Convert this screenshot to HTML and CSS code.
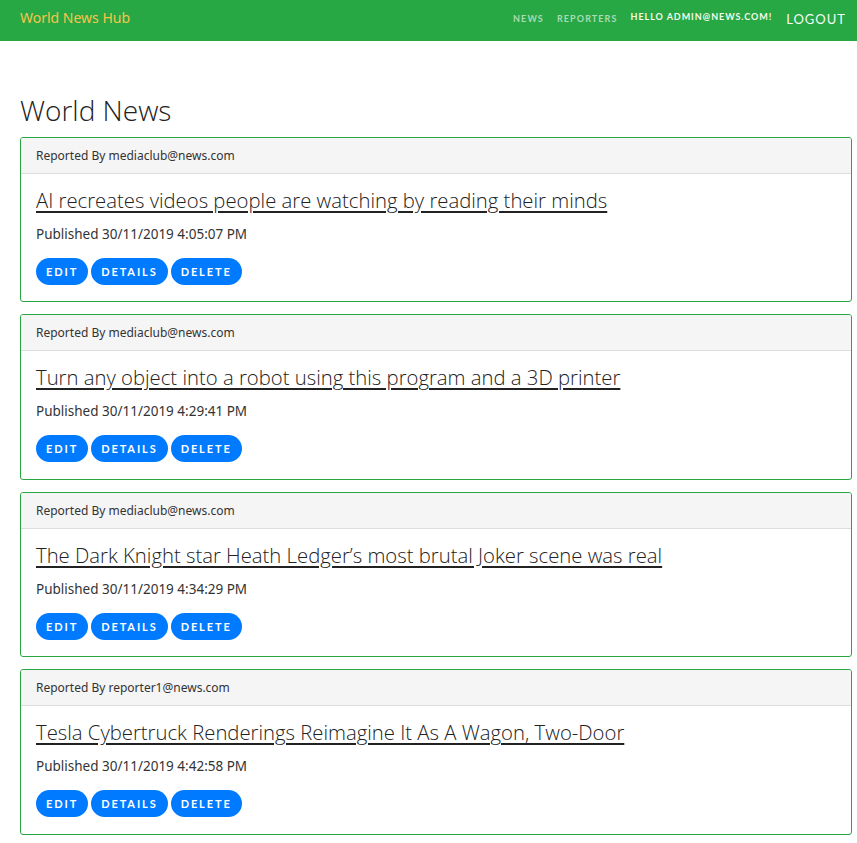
FILE: index.html
```html
<!DOCTYPE html>
<html>
<head>
<meta charset="utf-8">
<link rel="stylesheet" href="styles.css">
</head>
<body>
<nav class="navbar">
  <a class="brand" href="#">World News Hub</a>
  <div class="nav-right">
    <a class="nav-link" href="#">News</a>
    <a class="nav-link" href="#">Reporters</a>
    <span class="hello">Hello admin@news.com!</span>
    <a class="logout" href="#">Logout</a>
  </div>
</nav>
<main class="container">
  <h1 class="page-title">World News</h1>

  <div class="card">
    <div class="card-header">Reported By mediaclub@news.com</div>
    <div class="card-body">
      <a class="news-title" href="#">AI recreates videos people are watching by reading their minds</a>
      <p class="published">Published 30/11/2019 4:05:07 PM</p>
      <div class="actions"><a class="btn" href="#">Edit</a><a class="btn" href="#">Details</a><a class="btn" href="#">Delete</a></div>
    </div>
  </div>

  <div class="card">
    <div class="card-header">Reported By mediaclub@news.com</div>
    <div class="card-body">
      <a class="news-title" href="#">Turn any object into a robot using this program and a 3D printer</a>
      <p class="published">Published 30/11/2019 4:29:41 PM</p>
      <div class="actions"><a class="btn" href="#">Edit</a><a class="btn" href="#">Details</a><a class="btn" href="#">Delete</a></div>
    </div>
  </div>

  <div class="card">
    <div class="card-header">Reported By mediaclub@news.com</div>
    <div class="card-body">
      <a class="news-title" href="#">The Dark Knight star Heath Ledger’s most brutal Joker scene was real</a>
      <p class="published">Published 30/11/2019 4:34:29 PM</p>
      <div class="actions"><a class="btn" href="#">Edit</a><a class="btn" href="#">Details</a><a class="btn" href="#">Delete</a></div>
    </div>
  </div>

  <div class="card">
    <div class="card-header">Reported By reporter1@news.com</div>
    <div class="card-body">
      <a class="news-title" href="#">Tesla Cybertruck Renderings Reimagine It As A Wagon, Two-Door</a>
      <p class="published">Published 30/11/2019 4:42:58 PM</p>
      <div class="actions"><a class="btn" href="#">Edit</a><a class="btn" href="#">Details</a><a class="btn" href="#">Delete</a></div>
    </div>
  </div>
</main>
</body>
</html>
```
FILE: styles.css
```css
* { box-sizing: border-box; }
html, body { margin: 0; padding: 0; }
body {
  font-family: "Noto Sans", sans-serif;
  color: #333;
  background: #fff;
}
a { text-decoration: none; }

.navbar {
  height: 41px;
  background: #28a745;
  display: flex;
  align-items: center;
  justify-content: space-between;
  padding: 0 11px 0 20px;
}
.brand {
  color: #f5c54a;
  font-family: "Noto Sans", sans-serif;
  font-size: 14px;
  margin-top: -6px;
}
.nav-right {
  display: flex;
  align-items: center;
  margin-top: -4px;
}
.nav-link {
  font-family: Lato, sans-serif;
  font-weight: 700;
  font-size: 9px;
  letter-spacing: 1.1px;
  text-transform: uppercase;
  color: #a9dbb5;
  margin-right: 13px;
}
.hello {
  font-family: Lato, sans-serif;
  font-weight: 700;
  font-size: 9px;
  letter-spacing: 0.95px;
  text-transform: uppercase;
  color: #f4fbe8;
  margin-top: -5px;
}
.logout {
  font-family: Lato, sans-serif;
  font-size: 13px;
  letter-spacing: 1px;
  text-transform: uppercase;
  color: #f2fbf4;
  margin-left: 14px;
}

.container {
  padding: 51px 5px 0 20px;
}
.page-title {
  margin: 0 0 9px;
  font-family: "Open Sans", sans-serif;
  font-weight: 300;
  font-size: 28px;
  line-height: 36px;
  color: #222;
}

.card {
  border: 1px solid #28a745;
  border-radius: 3px;
  margin-bottom: 12px;
  overflow: hidden;
}
.card-header {
  height: 36px;
  background: #f5f5f5;
  border-bottom: 1px solid #ddd;
  padding: 0 15px;
  display: flex;
  align-items: center;
  font-size: 12px;
  color: #333;
}
.card-body {
  padding: 11px 15px 16.4px;
}
.news-title {
  font-family: "Open Sans", sans-serif;
  font-weight: 300;
  font-size: 20.3px;
  line-height: 30px;
  color: #222;
  text-decoration: underline;
  text-decoration-thickness: 2px;
  text-underline-offset: 3px;
}
.published {
  margin: 10px 0 15px;
  font-size: 13.5px;
  line-height: 18px;
  color: #333;
}
.actions {
  display: flex;
  gap: 3px;
}
.btn {
  display: inline-block;
  height: 27px;
  line-height: 27px;
  padding: 0 10px;
  border-radius: 14px;
  background: #007bff;
  color: #fff;
  font-family: Lato, sans-serif;
  font-weight: 700;
  font-size: 11px;
  letter-spacing: 1.9px;
  text-transform: uppercase;
}
```
